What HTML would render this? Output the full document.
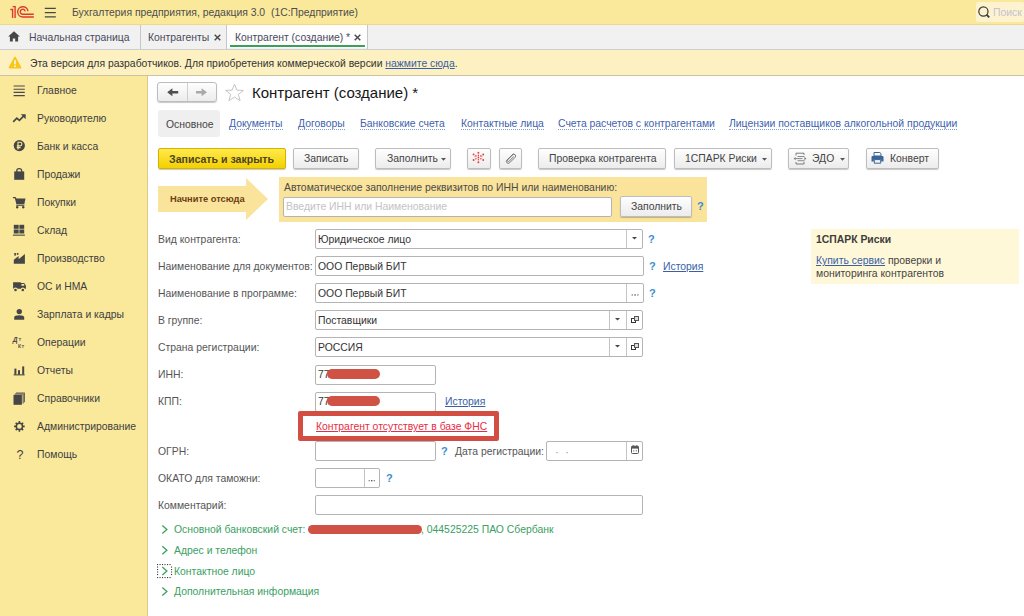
<!DOCTYPE html>
<html><head><meta charset="utf-8">
<style>
*{box-sizing:border-box;margin:0;padding:0}
html,body{width:1024px;height:616px;overflow:hidden;background:#fff}
body{position:relative;font-family:"Liberation Sans",sans-serif;font-size:10.4px;line-height:12px;color:#4a4a4a}
.a{position:absolute;white-space:nowrap}
.lnk{color:#3a5ea8;text-decoration:underline}
.dl{position:absolute;white-space:nowrap;color:#3e62ad;border-bottom:1px dotted #7f9bd0;line-height:10px;padding-bottom:0}
.btn{position:absolute;height:21px;border:1px solid #bdbdbd;border-radius:2px;background:linear-gradient(#fefefe,#ececec);box-shadow:0 1px 1px rgba(0,0,0,.22);color:#444}
.inp{position:absolute;height:20px;border:1px solid #b4b4b4;border-radius:2px;background:#fff}
.lbl{position:absolute;white-space:nowrap;left:158px;color:#555}
.val{position:absolute;white-space:nowrap;left:318px;color:#333}
.q{position:absolute;color:#3d8ed0;font-weight:bold;font-size:11px;line-height:12px}
.sep{position:absolute;top:0;bottom:0;width:1px;background:#c4c4c4}
.g{position:absolute;white-space:nowrap;left:174px;color:#3aa062}
.si{position:absolute;white-space:nowrap;left:37px;color:#404040}
</style></head><body>
<!-- ===== title bar ===== -->
<div class="a" style="left:0;top:0;width:1024px;height:25px;background:#fae99b;border-bottom:1px solid #efd985"></div>
<svg class="a" style="left:5px;top:2px" width="32" height="20" viewBox="0 0 32 20">
<g fill="none" stroke="#dc3a2c" stroke-width="1.4" stroke-linecap="butt">
<path d="M5.3 7.5H7.6V16"/>
<path d="M7.6 4.6H10.1V16"/>
<path d="M22.95 9.3A5.15 5.15 0 1 0 17.8 15H28.8"/>
<path d="M20.25 9.3A2.5 2.5 0 1 0 17.8 12.3H28.8"/>
</g></svg>
<svg class="a" style="left:44px;top:6px" width="13" height="13" viewBox="0 0 13 13"><g stroke="#474747" stroke-width="1.15"><path d="M0.8 2.4H11.8M0.8 6.6H11.8M0.8 10.9H11.8"/></g></svg>
<div class="a" style="left:72px;top:7px;color:#4d4d4d">Бухгалтерия предприятия, редакция 3.0&nbsp; (1С:Предприятие)</div>
<div class="a" style="left:976px;top:2px;width:48px;height:20px;background:#fdf4cf;border-radius:2px"></div>
<svg class="a" style="left:977px;top:5px" width="14" height="14" viewBox="0 0 14 14"><circle cx="6.4" cy="6.5" r="4.6" fill="none" stroke="#3a3a3a" stroke-width="1.2"/><path d="M9.6 9.7L12.2 12.3" stroke="#3a3a3a" stroke-width="1.9"/></svg>
<div class="a" style="left:993px;top:7px;color:#c6c0d4">Поиск</div>

<!-- ===== tabs ===== -->
<div class="a" style="left:0;top:25px;width:1024px;height:25px;background:#f1f1f1;border-bottom:1px solid #cdcdcd"></div>
<div class="a" style="left:227px;top:25px;width:140px;height:23px;background:#fdfdfd"></div>
<svg class="a" style="left:8px;top:31px" width="12" height="11" viewBox="0 0 12 11"><path d="M6 0.3L0.2 5.6H1.9V10.6H4.8V7.4H7.2V10.6H10.1V5.6H11.8Z" fill="#474747"/></svg>
<div class="a" style="left:29px;top:32px;color:#4a4a5c">Начальная страница</div>
<div class="a" style="left:140px;top:25px;width:1px;height:24px;background:#c6c6c6"></div>
<div class="a" style="left:148px;top:32px;color:#4a4a5c">Контрагенты</div>
<svg class="a" style="left:214px;top:34px" width="7" height="7" viewBox="0 0 7 7"><path d="M0.7 0.7L6.3 6.3M6.3 0.7L0.7 6.3" stroke="#484848" stroke-width="1.4"/></svg>
<div class="a" style="left:226px;top:25px;width:1px;height:24px;background:#c6c6c6"></div>
<div class="a" style="left:235px;top:32px;color:#4a4a5c">Контрагент (создание) *</div>
<svg class="a" style="left:354px;top:34px" width="7" height="7" viewBox="0 0 7 7"><path d="M0.7 0.7L6.3 6.3M6.3 0.7L0.7 6.3" stroke="#484848" stroke-width="1.4"/></svg>
<div class="a" style="left:230px;top:45px;width:135px;height:2px;background:#3a9f58"></div>
<div class="a" style="left:367px;top:25px;width:1px;height:24px;background:#c6c6c6"></div>

<!-- ===== warning ===== -->
<div class="a" style="left:0;top:50px;width:1024px;height:26px;background:#fdf1c1;border-bottom:1px solid #cbc4a4"></div>
<svg class="a" style="left:8px;top:56px" width="14" height="13" viewBox="0 0 14 13"><path d="M7 0.6Q7.4 0.6 7.7 1.1L13.4 11.6Q13.6 12.4 12.8 12.4H1.2Q0.4 12.4 0.6 11.6L6.3 1.1Q6.6 0.6 7 0.6Z" fill="#f7c51c"/><path d="M7 4.3V8.3" stroke="#fff" stroke-width="1.5"/><circle cx="7" cy="10.2" r="0.85" fill="#fff"/></svg>
<div class="a" style="left:30px;top:58px;color:#333">Эта версия для разработчиков. Для приобретения коммерческой версии <span class="lnk">нажмите сюда</span>.</div>

<!-- ===== sidebar ===== -->
<div class="a" style="left:0;top:76px;width:148px;height:540px;background:#fae99b;border-right:1px solid #dcc985"></div>
<div class="si" style="top:85px">Главное</div>
<div class="si" style="top:113px">Руководителю</div>
<div class="si" style="top:141px">Банк и касса</div>
<div class="si" style="top:169px">Продажи</div>
<div class="si" style="top:197px">Покупки</div>
<div class="si" style="top:225px">Склад</div>
<div class="si" style="top:253px">Производство</div>
<div class="si" style="top:281px">ОС и НМА</div>
<div class="si" style="top:309px">Зарплата и кадры</div>
<div class="si" style="top:337px">Операции</div>
<div class="si" style="top:365px">Отчеты</div>
<div class="si" style="top:393px">Справочники</div>
<div class="si" style="top:421px">Администрирование</div>
<div class="si" style="top:449px">Помощь</div>
<svg class="a" style="left:0;top:0" width="148" height="616" viewBox="0 0 148 616">
<g fill="#464646" stroke="none">
<path d="M13.6 86H24.8M13.6 89.2H24.8M13.6 92.4H24.8M13.6 95.6H24.8" stroke="#4a4a4a" stroke-width="1.1"/>
<path d="M13.2 121.8L16.8 118.2L19.4 120.4L23.6 116.2" fill="none" stroke="#464646" stroke-width="1.7"/>
<path d="M20.8 114.3H25.7V119.2Z"/>
<circle cx="19.3" cy="145.6" r="5.6"/>
<path d="M18 149.4V142.3H20.2Q21.9 142.3 21.9 144.1Q21.9 145.9 20.2 145.9H16.8M16.8 147.6H20.6" fill="none" stroke="#fae99b" stroke-width="1.1"/>
<rect x="14.2" y="171.4" width="10" height="8.4"/>
<path d="M16.8 172V170.5Q16.8 168.6 19.2 168.6Q21.6 168.6 21.6 170.5V172" fill="none" stroke="#464646" stroke-width="1.3"/>
<path d="M12.9 197.6H15.2L16.1 199" fill="none" stroke="#464646" stroke-width="1.2"/>
<path d="M14.9 198.4H25.5L24.3 204.3H16.4Z"/>
<rect x="16.2" y="204.8" width="8.2" height="1"/>
<circle cx="17.2" cy="207.2" r="1.2"/><circle cx="23.2" cy="207.2" r="1.2"/>
<rect x="13.8" y="224.8" width="4.9" height="4"/><rect x="19.4" y="224.8" width="4.8" height="4"/>
<rect x="13.8" y="229.5" width="4.9" height="4"/><rect x="19.4" y="229.5" width="4.8" height="4"/>
<rect x="12.9" y="234.6" width="12" height="1.1"/>
<path d="M13.8 263.8V259.8L18.6 256V259.2L24.9 254V263.8Z"/>
<rect x="14.3" y="253" width="1.6" height="2.6"/><rect x="16.8" y="253" width="1.6" height="1.8"/>
<path d="M13.1 282.2H20.8V283H24.2L25.9 285.6V288.7H13.1Z"/>
<rect x="21.4" y="284" width="2.9" height="1.8" rx="0.5" fill="#fae99b"/>
<circle cx="15.5" cy="289.6" r="2.1" fill="#fae99b"/><circle cx="22.8" cy="289.6" r="2.1" fill="#fae99b"/>
<circle cx="15.5" cy="290" r="1.3"/><circle cx="22.8" cy="290" r="1.3"/>
<circle cx="19.3" cy="311.6" r="2.7"/>
<path d="M14.2 319.8V317.6Q14.2 315.2 19.2 315.2Q24.2 315.2 24.2 317.6V319.8Z"/>
<text x="12.8" y="341.8" font-family="Liberation Sans" font-size="6.6" font-weight="bold" font-style="italic" fill="#4a4a4a">Д</text>
<text x="18.4" y="340.6" font-family="Liberation Sans" font-size="4.4" font-weight="bold" fill="#4a4a4a">T</text>
<text x="17.9" y="347.8" font-family="Liberation Sans" font-size="4.9" font-weight="bold" fill="#4a4a4a">К</text>
<text x="21.6" y="347.8" font-family="Liberation Sans" font-size="4.4" font-weight="bold" fill="#4a4a4a">T</text>
<rect x="14.4" y="368.6" width="2" height="6"/><rect x="18" y="370.2" width="2" height="4.4"/><rect x="22.2" y="366.4" width="2" height="8.2"/>
<rect x="13.6" y="374.3" width="11" height="1.1"/>
<path d="M16 392.4H24.9V402.2H23.9V393.4H16Z" fill="#5a5a5a"/>
<path d="M14.8 393.6H23.6V403.4H22.6V394.6H14.8Z" fill="#4e4e4e"/>
<rect x="13.5" y="394.8" width="8.4" height="10"/>
<g transform="translate(19.4 426.4)" stroke="#464646">
<circle cx="0" cy="0" r="3.1" fill="none" stroke-width="1.5"/>
<path d="M0 -3.2V-5.3M0 3.2V5.3M-3.2 0H-5.3M3.2 0H5.3M2.3 -2.3L3.7 -3.7M-2.3 -2.3L-3.7 -3.7M2.3 2.3L3.7 3.7M-2.3 2.3L-3.7 3.7" stroke-width="1.6"/>
</g>
<text x="16.4" y="459.4" font-family="Liberation Sans" font-size="12.5" fill="#3c3c3c">?</text>
</g></svg>

<!-- ===== header ===== -->
<div class="btn" style="left:157px;top:82px;width:60px;height:20px;border-radius:3px"></div>
<div class="a" style="left:187px;top:83px;width:1px;height:18px;background:#cfcfcf"></div>
<svg class="a" style="left:166px;top:87px" width="13" height="11" viewBox="0 0 13 11"><path d="M1.2 5.2L6.4 1.2V4H12.2V6.5H6.4V9.3Z" fill="#505050"/></svg>
<svg class="a" style="left:195px;top:87px" width="13" height="11" viewBox="0 0 13 11"><path d="M12 5.2L6.6 1.2V4H1V6.5H6.6V9.3Z" fill="#a9a9a9"/></svg>
<svg class="a" style="left:224px;top:83px" width="21" height="19" viewBox="0 0 21 19"><path d="M10.5 1.2L12.9 7.2L19.4 7.4L14.3 11.4L16.1 17.7L10.5 14L4.9 17.7L6.7 11.4L1.6 7.4L8.1 7.2Z" fill="none" stroke="#c4c4c4" stroke-width="1"/></svg>
<div class="a" style="left:252px;top:84px;font-size:15px;line-height:17px;color:#161616">Контрагент (создание) *</div>

<div class="a" style="left:158px;top:110px;width:62px;height:27px;background:#efefef;border-radius:3px"></div>
<div class="a" style="left:166px;top:119px;color:#444">Основное</div>
<div class="dl" style="left:229px;top:119px">Документы</div>
<div class="dl" style="left:298px;top:119px">Договоры</div>
<div class="dl" style="left:360px;top:119px">Банковские счета</div>
<div class="dl" style="left:461px;top:119px">Контактные лица</div>
<div class="dl" style="left:558px;top:119px">Счета расчетов с контрагентами</div>
<div class="dl" style="left:729px;top:119px">Лицензии поставщиков алкогольной продукции</div>

<!-- ===== toolbar ===== -->
<div class="btn" style="left:158px;top:148px;width:128px;height:21px;background:linear-gradient(#ffea4c,#f4d000);border-color:#d6b200"></div>
<div class="a" style="left:169px;top:153px;font-weight:bold;font-size:10.6px;color:#4a4428">Записать и закрыть</div>
<div class="btn" style="left:293px;top:148px;width:66px"></div>
<div class="a" style="left:304px;top:153px;color:#444">Записать</div>
<div class="btn" style="left:375px;top:148px;width:76px"></div>
<div class="a" style="left:387px;top:153px;color:#444">Заполнить</div>
<svg class="a" style="left:441px;top:158px" width="5" height="3"><path d="M0 0H5L2.5 2.7Z" fill="#555"/></svg>
<div class="btn" style="left:467px;top:148px;width:24px"></div>
<svg class="a" style="left:471px;top:151px" width="15" height="13" viewBox="0 0 15 13" fill="#e23d36">
<circle cx="7.4" cy="1.7" r="0.95"/><circle cx="7.4" cy="11.3" r="0.95"/><circle cx="7.4" cy="4.2" r="0.75"/><circle cx="7.4" cy="6.5" r="0.9"/><circle cx="7.4" cy="8.8" r="0.75"/>
<circle cx="2.6" cy="3.4" r="0.95"/><circle cx="12.2" cy="3.5" r="0.95"/><circle cx="2.6" cy="9" r="0.95"/><circle cx="12.2" cy="9" r="0.95"/>
<circle cx="4.9" cy="4.9" r="0.8"/><circle cx="9.9" cy="4.9" r="0.8"/><circle cx="4.9" cy="7.8" r="0.75"/><circle cx="9.9" cy="7.8" r="0.75"/>
<circle cx="3.9" cy="5.6" r="0.6" fill="#f08080"/><circle cx="10.9" cy="5.6" r="0.6" fill="#f08080"/>
</svg>
<div class="btn" style="left:499px;top:148px;width:23px"></div>
<svg class="a" style="left:504px;top:152px" width="13" height="12" viewBox="0 0 13 12"><path d="M9.5 1.5L2.8 8.2Q1.6 9.7 3 10.9Q4.4 12 5.8 10.6L11 5.4Q12.3 3.9 11.1 2.7Q9.9 1.6 8.6 2.9L3.6 7.9Q3 8.7 3.7 9.3Q4.4 9.9 5.1 9.2L9.8 4.5" fill="none" stroke="#777" stroke-width="1"/></svg>
<div class="btn" style="left:538px;top:148px;width:128px"></div>
<div class="a" style="left:549px;top:153px;color:#444">Проверка контрагента</div>
<div class="btn" style="left:674px;top:148px;width:98px"></div>
<div class="a" style="left:685px;top:153px;color:#444">1СПАРК Риски</div>
<svg class="a" style="left:762px;top:158px" width="5" height="3"><path d="M0 0H5L2.5 2.7Z" fill="#555"/></svg>
<div class="btn" style="left:788px;top:148px;width:61px"></div>
<svg class="a" style="left:793px;top:152px" width="14" height="13" viewBox="0 0 14 13" fill="none" stroke="#7a7a7a" stroke-width="1">
<path d="M3 3.5V1.2H11V3"/><path d="M3 10V12H11V9.8"/><path d="M4.5 4.5H11.5M2.5 6.6H9.5M4.5 8.7H11.5" stroke="#8a8a8a"/>
<path d="M0.6 6.6L2.6 5V8.2Z" fill="#7a7a7a" stroke="none"/><path d="M13.4 6.6L11.4 5V8.2Z" fill="#7a7a7a" stroke="none"/>
</svg>
<div class="a" style="left:812px;top:153px;color:#444">ЭДО</div>
<svg class="a" style="left:840px;top:158px" width="5" height="3"><path d="M0 0H5L2.5 2.7Z" fill="#555"/></svg>
<div class="btn" style="left:866px;top:148px;width:73px"></div>
<svg class="a" style="left:871px;top:152px" width="13" height="12" viewBox="0 0 13 12">
<path d="M3 0.5H8.8L10 1.7V4H3Z" fill="none" stroke="#3a6599" stroke-width="1"/>
<path d="M1.5 4H11.5Q12.5 4 12.5 5V9.5H10.2V7.5H2.8V9.5H0.5V5Q0.5 4 1.5 4Z" fill="#3a6599"/>
<path d="M3.3 7.6H9.7V11.2H3.3Z" fill="none" stroke="#3a6599" stroke-width="1"/>
</svg>
<div class="a" style="left:890px;top:153px;color:#444">Конверт</div>

<!-- ===== start here ===== -->
<svg class="a" style="left:158px;top:178px" width="110" height="42" viewBox="0 0 110 42"><path d="M0 8H88V0L110 21L88 42V34H0Z" fill="#fae39a"/></svg>
<div class="a" style="left:170px;top:193px;font-size:9.3px;font-weight:bold;color:#6b3f12">Начните отсюда</div>
<div class="a" style="left:279px;top:177px;width:428px;height:45px;background:#fae39a"></div>
<div class="a" style="left:284px;top:182px;color:#4a4a4a">Автоматическое заполнение реквизитов по ИНН или наименованию:</div>
<div class="inp" style="left:283px;top:197px;width:329px"></div>
<div class="a" style="left:286px;top:201px;color:#c3c3c3">Введите ИНН или Наименование</div>
<div class="btn" style="left:620px;top:196px;width:72px"></div>
<div class="a" style="left:631px;top:201px;color:#444">Заполнить</div>
<div class="q" style="left:697px;top:200px">?</div>

<!-- ===== form ===== -->
<div class="lbl" style="top:234px">Вид контрагента:</div>
<div class="inp" style="left:315px;top:229px;width:328px"><div class="sep" style="left:310px"></div></div>
<svg class="a" style="left:632px;top:237px" width="5" height="3"><path d="M0 0H5L2.5 2.6Z" fill="#444"/></svg>
<div class="val" style="top:234px">Юридическое лицо</div>
<div class="q" style="left:648px;top:233px">?</div>

<div class="lbl" style="top:261px">Наименование для документов:</div>
<div class="inp" style="left:315px;top:256px;width:329px"></div>
<div class="val" style="top:261px">ООО Первый БИТ</div>
<div class="q" style="left:649px;top:260px">?</div>
<div class="a lnk" style="left:663px;top:261px">История</div>

<div class="lbl" style="top:288px">Наименование в программе:</div>
<div class="inp" style="left:315px;top:283px;width:329px"><div class="sep" style="left:310px"></div></div>
<svg class="a" style="left:631px;top:294px" width="9" height="2"><rect x="0.6" y="0.3" width="1.3" height="1.3" fill="#777"/><rect x="3.4" y="0.3" width="1.3" height="1.3" fill="#444"/><rect x="6.2" y="0.3" width="1.3" height="1.3" fill="#777"/></svg>
<div class="val" style="top:288px">ООО Первый БИТ</div>
<div class="q" style="left:649px;top:287px">?</div>

<div class="lbl" style="top:315px">В группе:</div>
<div class="inp" style="left:315px;top:310px;width:328px"><div class="sep" style="left:293px"></div><div class="sep" style="left:310px"></div></div>
<svg class="a" style="left:615px;top:318px" width="5" height="3"><path d="M0 0H5L2.5 2.6Z" fill="#444"/></svg>
<svg class="a" style="left:630px;top:315px" width="10" height="9" viewBox="0 0 10 9"><rect x="1.5" y="3.5" width="4" height="4" fill="#fff" stroke="#333" stroke-width="1"/><rect x="4.5" y="1.5" width="4" height="4" fill="#ddd" stroke="#555" stroke-width="1"/></svg>
<div class="val" style="top:315px">Поставщики</div>

<div class="lbl" style="top:342px">Страна регистрации:</div>
<div class="inp" style="left:315px;top:337px;width:328px"><div class="sep" style="left:293px"></div><div class="sep" style="left:310px"></div></div>
<svg class="a" style="left:615px;top:345px" width="5" height="3"><path d="M0 0H5L2.5 2.6Z" fill="#444"/></svg>
<svg class="a" style="left:630px;top:342px" width="10" height="9" viewBox="0 0 10 9"><rect x="1.5" y="3.5" width="4" height="4" fill="#fff" stroke="#333" stroke-width="1"/><rect x="4.5" y="1.5" width="4" height="4" fill="#ddd" stroke="#555" stroke-width="1"/></svg>
<div class="val" style="top:342px">РОССИЯ</div>

<div class="lbl" style="top:369px">ИНН:</div>
<div class="inp" style="left:315px;top:365px;width:121px"></div>
<div class="val" style="top:369px">77</div>
<div class="a" style="left:327px;top:369px;width:53px;height:10px;border-radius:5px;background:#d05244"></div>

<div class="lbl" style="top:396px">КПП:</div>
<div class="inp" style="left:315px;top:392px;width:121px"></div>
<div class="val" style="top:396px">77</div>
<div class="a" style="left:327px;top:396px;width:53px;height:10px;border-radius:5px;background:#d05244"></div>
<div class="a lnk" style="left:445px;top:396px">История</div>

<div class="a" style="left:298px;top:411px;width:201px;height:30px;border:5px solid #d24e43;border-radius:2px;background:#fff"></div>
<div class="a" style="left:316px;top:421px;color:#e52d44;text-decoration:underline">Контрагент отсутствует в базе ФНС</div>

<div class="lbl" style="top:446px">ОГРН:</div>
<div class="inp" style="left:315px;top:441px;width:121px"></div>
<div class="q" style="left:441px;top:445px">?</div>
<div class="a" style="left:455px;top:446px;color:#555">Дата регистрации:</div>
<div class="inp" style="left:546px;top:441px;width:97px"><div class="sep" style="left:79px"></div></div>
<svg class="a" style="left:555px;top:452px" width="14" height="2"><rect x="1.3" y="0" width="1.2" height="1.2" fill="#9a9a9a"/><rect x="11.5" y="0" width="1.2" height="1.2" fill="#9a9a9a"/></svg>
<svg class="a" style="left:631px;top:445px" width="8" height="9" viewBox="0 0 8 9"><rect x="0.5" y="1.2" width="7" height="7.3" rx="1" fill="#fff" stroke="#555" stroke-width="1"/><rect x="0.5" y="1.2" width="7" height="2.4" fill="#555"/><path d="M2.2 0.2V1.5M5.8 0.2V1.5" stroke="#555" stroke-width="0.9"/><rect x="2" y="5.2" width="1.3" height="1.2" fill="#888"/><rect x="4.7" y="5.2" width="1.3" height="1.2" fill="#888"/></svg>

<div class="lbl" style="top:473px">ОКАТО для таможни:</div>
<div class="inp" style="left:315px;top:468px;width:65px"><div class="sep" style="left:48px"></div></div>
<svg class="a" style="left:368px;top:480px" width="9" height="2"><rect x="0.6" y="0" width="1.3" height="1.3" fill="#888"/><rect x="3.1" y="0" width="1.3" height="1.3" fill="#444"/><rect x="5.7" y="0" width="1.3" height="1.3" fill="#888"/></svg>
<div class="q" style="left:386px;top:472px">?</div>

<div class="lbl" style="top:500px">Комментарий:</div>
<div class="inp" style="left:315px;top:495px;width:328px"></div>

<!-- groups -->
<svg class="a" style="left:155px;top:520px" width="20" height="80" viewBox="155 520 20 80" fill="none" stroke="#3aa062" stroke-width="1.3">
<path d="M162.3 525.6L166.9 529.6L162.3 533.6"/>
<path d="M162.3 546.3L166.9 550.3L162.3 554.3"/>
<path d="M162.3 566.9L166.9 570.9L162.3 574.9"/>
<path d="M162.3 587.6L166.9 591.6L162.3 595.6"/>
<g fill="#3a3a3a" stroke="none"><rect x="157.0" y="564" width="1.1" height="1.1"/><rect x="157.0" y="577" width="1.1" height="1.1"/><rect x="159.5" y="564" width="1.1" height="1.1"/><rect x="159.5" y="577" width="1.1" height="1.1"/><rect x="162.0" y="564" width="1.1" height="1.1"/><rect x="162.0" y="577" width="1.1" height="1.1"/><rect x="164.5" y="564" width="1.1" height="1.1"/><rect x="164.5" y="577" width="1.1" height="1.1"/><rect x="167.0" y="564" width="1.1" height="1.1"/><rect x="167.0" y="577" width="1.1" height="1.1"/><rect x="169.5" y="564" width="1.1" height="1.1"/><rect x="169.5" y="577" width="1.1" height="1.1"/><rect x="157" y="566.5" width="1.1" height="1.1"/><rect x="171" y="566.5" width="1.1" height="1.1"/><rect x="157" y="569.0" width="1.1" height="1.1"/><rect x="171" y="569.0" width="1.1" height="1.1"/><rect x="157" y="571.5" width="1.1" height="1.1"/><rect x="171" y="571.5" width="1.1" height="1.1"/><rect x="157" y="574.0" width="1.1" height="1.1"/><rect x="171" y="574.0" width="1.1" height="1.1"/></g>
</svg>
<div class="g" style="top:524px">Основной банковский счет:</div>
<div class="a" style="left:308px;top:525px;width:114px;height:9px;border-radius:4.5px;background:#d05244"></div>
<div class="a" style="left:421px;top:524px;color:#3aa062">, 044525225 ПАО Сбербанк</div>
<div class="g" style="top:545px">Адрес и телефон</div>
<div class="g" style="top:566px">Контактное лицо</div>
<div class="g" style="top:586px">Дополнительная информация</div>

<!-- right panel -->
<div class="a" style="left:811px;top:229px;width:208px;height:55px;background:#fff8d8"></div>
<div class="a" style="left:816px;top:234px;font-weight:bold;color:#3c3c3c">1СПАРК Риски</div>
<div class="a" style="left:816px;top:255px;color:#444"><span class="lnk">Купить сервис</span> проверки и</div>
<div class="a" style="left:816px;top:268px;color:#444">мониторинга контрагентов</div>
</body></html>
